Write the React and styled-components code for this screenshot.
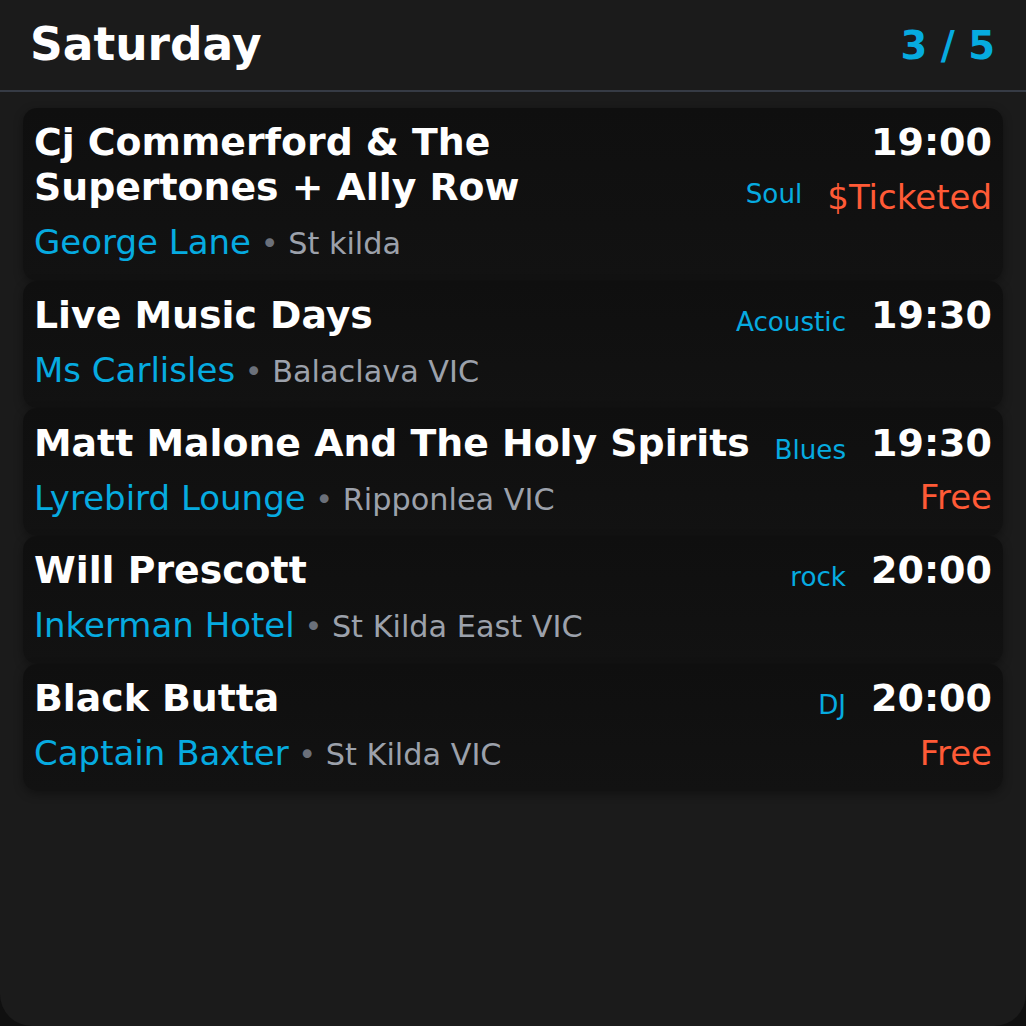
import React from 'react'
import styled, { createGlobalStyle } from 'styled-components'

const GlobalStyle = createGlobalStyle`
  html, body {
    margin: 0;
    padding: 0;
    background: #101010;
  }
  * {
    box-sizing: border-box;
  }
`

const Panel = styled.div`
  width: 1026px;
  height: 1026px;
  background: #1b1b1b;
  border-radius: 0 0 32px 32px;
  font-family: 'DejaVu Sans', 'Liberation Sans', sans-serif;
  color: #ffffff;
  overflow: hidden;
`

const Header = styled.header`
  display: flex;
  align-items: center;
  justify-content: space-between;
  padding: 18px 31px 17px 30px;
  border-bottom: 2px solid #363b45;

  h1 {
    margin: 0;
    font-size: 45.5px;
    line-height: 1.2;
    font-weight: bold;
  }
`

const Count = styled.span`
  font-size: 38.5px;
  font-weight: bold;
  color: #06abe0;
`

const List = styled.div`
  display: flex;
  flex-direction: column;
  padding: 16px 23px;
`

const Card = styled.div`
  display: flex;
  align-items: flex-start;
  gap: 25px;
  padding: 12.5px 11px 17.5px;
  border-radius: 14px;
  background: linear-gradient(180deg, #0f0f0f 0%, #121212 100%);
  box-shadow: 0 3px 10px rgba(0, 0, 0, 0.35);
`

const Main = styled.div`
  flex: 1;
  min-width: 0;
  display: flex;
  flex-direction: column;
  gap: 11.5px;
`

const TitleRow = styled.div`
  display: flex;
  align-items: flex-end;
  gap: 16px;
`

const Title = styled.div`
  flex: 1;
  font-size: 37.8px;
  line-height: 1.2;
  font-weight: bold;
`

const Genre = styled.span`
  font-size: 26.2px;
  line-height: 1.2;
  color: #06abe0;
  white-space: nowrap;
`

const Venue = styled.div`
  font-size: 34px;
  line-height: 1.2;
  color: #06abe0;
  white-space: nowrap;

  .place {
    font-size: 30.3px;
    color: #9ca1ab;
  }
  .dot {
    color: #6b707a;
  }
`

const Side = styled.div`
  display: flex;
  flex-direction: column;
  align-items: flex-end;
  gap: 11px;
`

const Time = styled.span`
  font-size: 38px;
  line-height: 1.2;
  font-weight: bold;
`

const Price = styled.span`
  font-size: 34px;
  line-height: 1.2;
  color: #ff5a36;
`

const gigs = [
  {
    title: 'Cj Commerford & The Supertones + Ally Row',
    genre: 'Soul',
    time: '19:00',
    price: '$Ticketed',
    venue: 'George Lane',
    place: 'St kilda',
  },
  {
    title: 'Live Music Days',
    genre: 'Acoustic',
    time: '19:30',
    venue: 'Ms Carlisles',
    place: 'Balaclava VIC',
  },
  {
    title: 'Matt Malone And The Holy Spirits',
    genre: 'Blues',
    time: '19:30',
    price: 'Free',
    venue: 'Lyrebird Lounge',
    place: 'Ripponlea VIC',
  },
  {
    title: 'Will Prescott',
    genre: 'rock',
    time: '20:00',
    venue: 'Inkerman Hotel',
    place: 'St Kilda East VIC',
  },
  {
    title: 'Black Butta',
    genre: 'DJ',
    time: '20:00',
    price: 'Free',
    venue: 'Captain Baxter',
    place: 'St Kilda VIC',
  },
]

export default function App() {
  return (
    <>
      <GlobalStyle />
      <Panel>
        <Header>
          <h1>Saturday</h1>
          <Count>3 / 5</Count>
        </Header>
        <List>
          {gigs.map((g) => (
            <Card key={g.title}>
              <Main>
                <TitleRow>
                  <Title>{g.title}</Title>
                  <Genre>{g.genre}</Genre>
                </TitleRow>
                <Venue>
                  {g.venue}
                  <span className="place">
                    {' '}
                    <span className="dot">•</span> {g.place}
                  </span>
                </Venue>
              </Main>
              <Side>
                <Time>{g.time}</Time>
                {g.price && <Price>{g.price}</Price>}
              </Side>
            </Card>
          ))}
        </List>
      </Panel>
    </>
  )
}
